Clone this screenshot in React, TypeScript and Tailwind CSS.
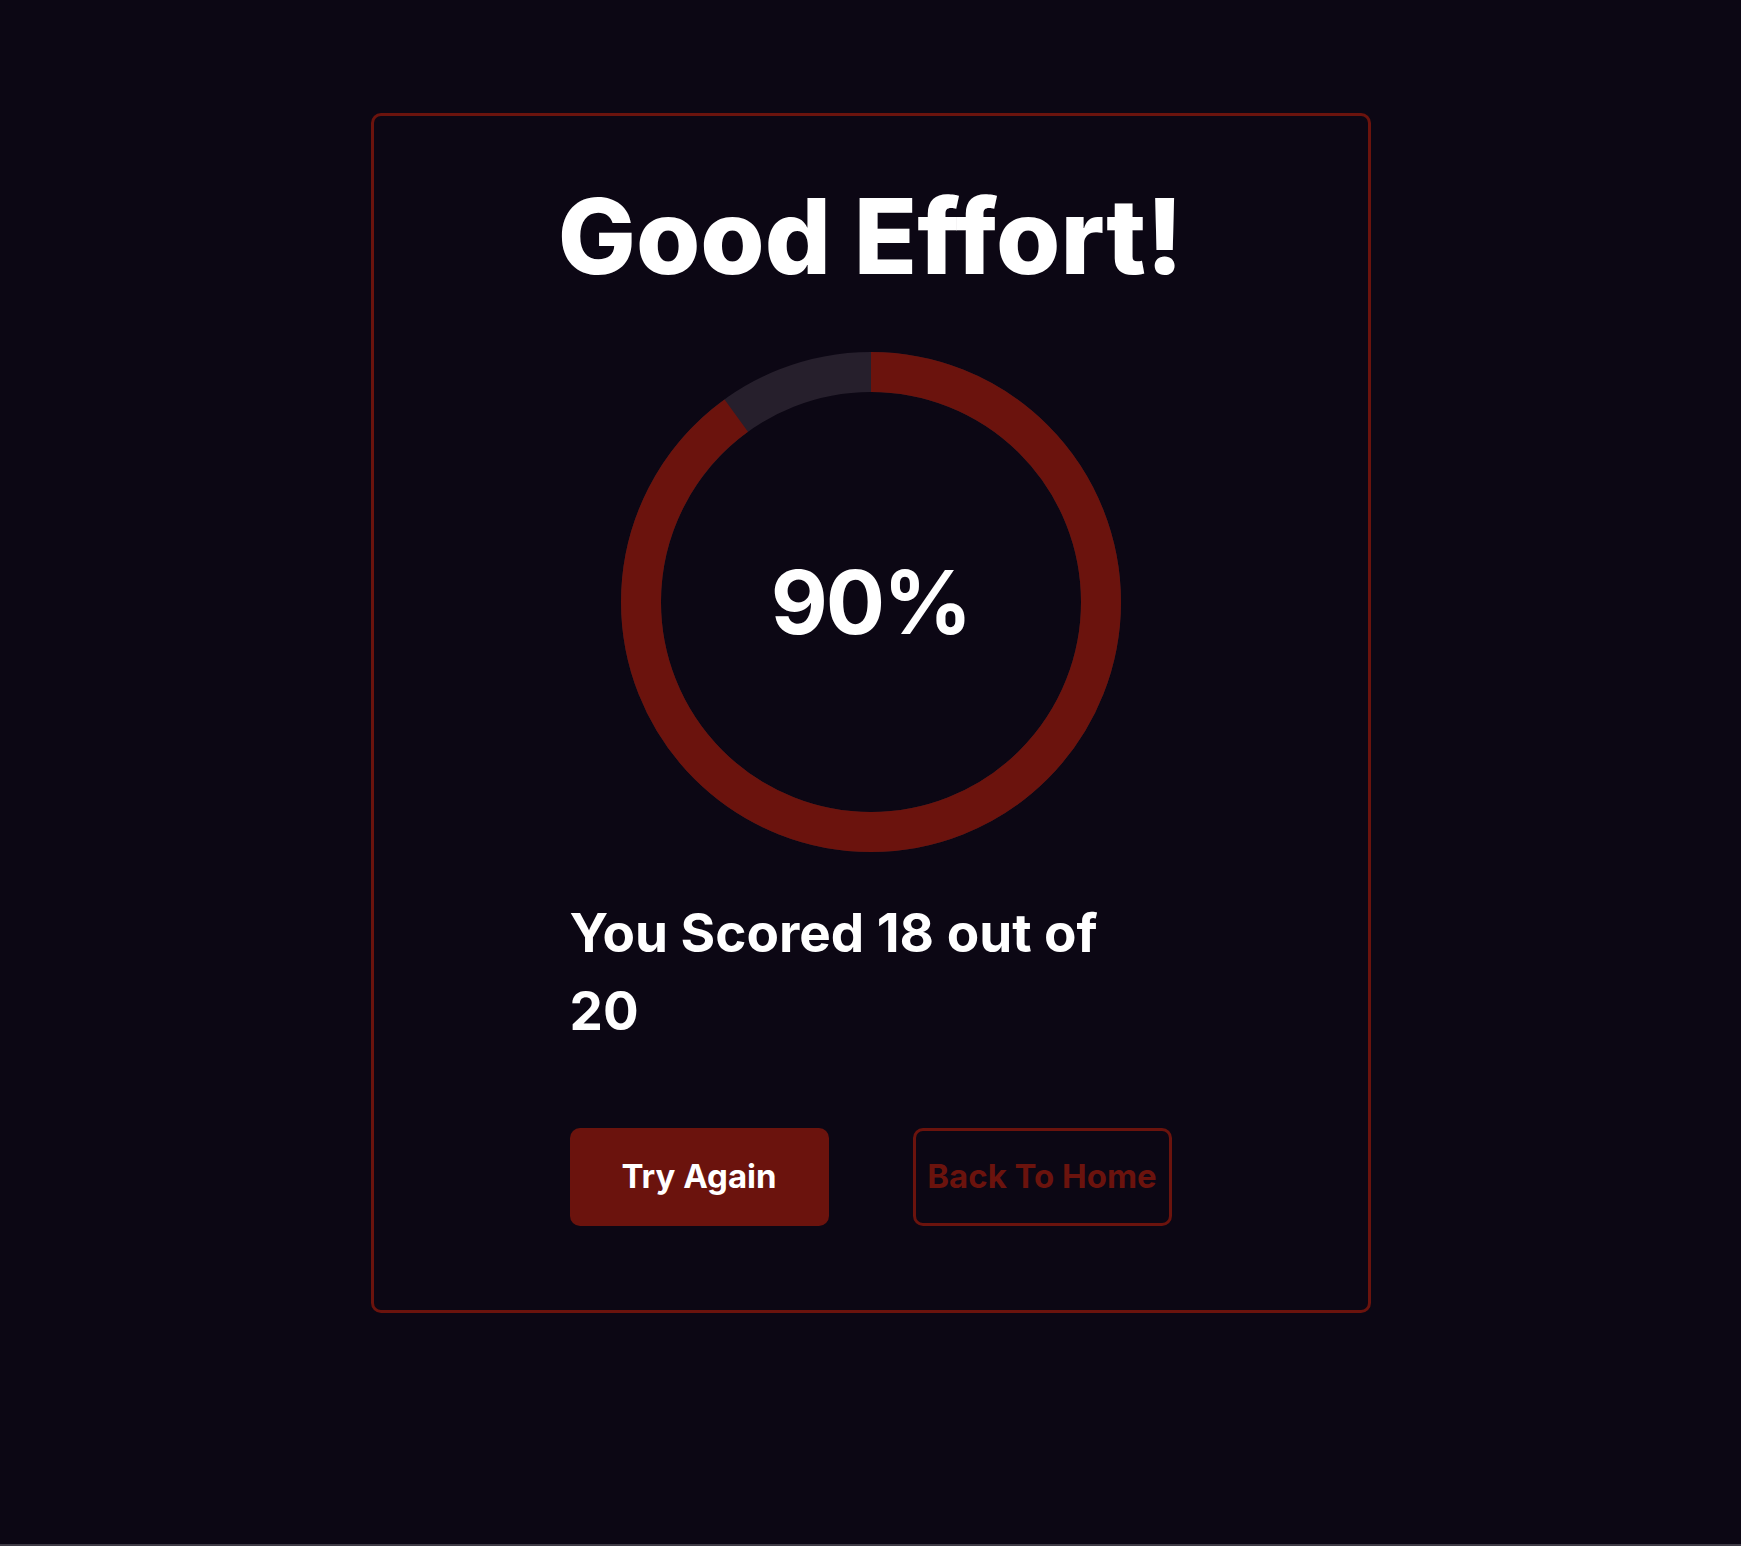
const score = 18;
const total = 20;

function ScoreRing({ percent }: { percent: number }) {
  const r = 230;
  const c = 2 * Math.PI * r;

  return (
    <div className="relative w-[500px] h-[500px] mt-[64px]">
      <svg width="500" height="500" viewBox="0 0 500 500" className="-rotate-90">
        <circle cx="250" cy="250" r={r} fill="none" stroke="#261f2c" strokeWidth="40" />
        <circle
          cx="250"
          cy="250"
          r={r}
          fill="none"
          stroke="#6b130d"
          strokeWidth="40"
          strokeDasharray={c}
          strokeDashoffset={c * (1 - percent / 100)}
        />
      </svg>
      <div className="absolute inset-0 flex items-center justify-center">
        <span className="text-[88px] leading-none font-bold tracking-tight text-white">{percent}%</span>
      </div>
    </div>
  );
}

export default function App() {
  const percent = Math.round((score / total) * 100);

  return (
    <div className="min-h-screen bg-[#3f3b46] font-['Inter',sans-serif]">
      <div className="h-[1544px] bg-[#0c0714] pt-[113px] flex justify-center">
        <div className="w-[1000px] h-[1200px] border-[3px] border-[#6b130d] rounded-[10px] flex flex-col items-center">
          <h1 className="mt-[68px] text-[104px] leading-none font-extrabold text-white">
            Good Effort!
          </h1>

          <ScoreRing percent={percent} />

          <div className="w-[602px] mt-[42px]">
            <p className="max-w-[560px] text-[53px] leading-[78px] font-bold text-white">
              You Scored {score} out of {total}
            </p>

            <div className="flex justify-between mt-[78px]">
              <button className="w-[259px] h-[98px] rounded-[10px] bg-[#6b130d] text-white text-[33px] font-bold">
                Try Again
              </button>
              <button className="w-[259px] h-[98px] rounded-[10px] border-[3px] border-[#6b130d] text-[#6b130d] text-[33px] font-bold">
                Back To Home
              </button>
            </div>
          </div>
        </div>
      </div>
    </div>
  );
}
